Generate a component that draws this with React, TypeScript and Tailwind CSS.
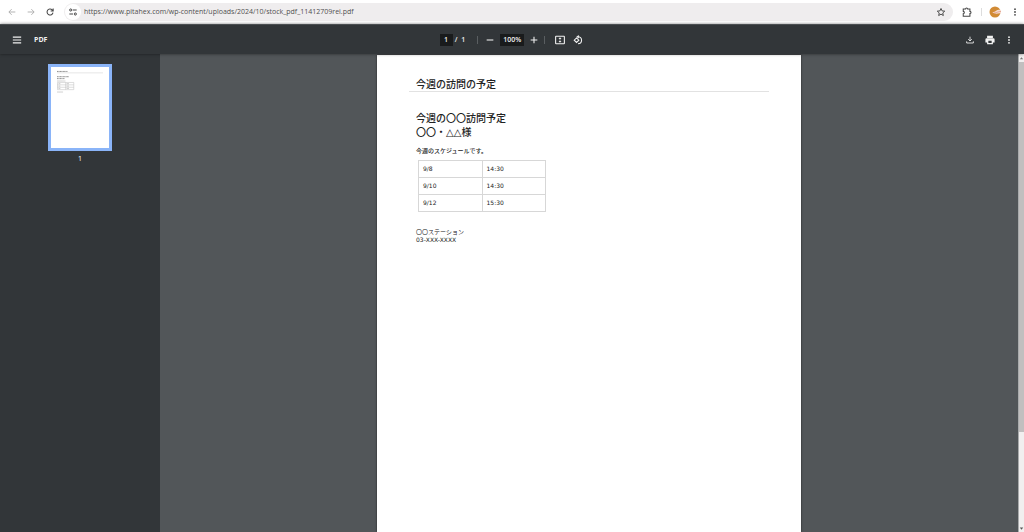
import type { ReactNode } from "react";

const visits = [
  { date: "9/8", time: "14:30" },
  { date: "9/10", time: "14:30" },
  { date: "9/12", time: "15:30" },
];

function Icon({ children, className = "" }: { children: ReactNode; className?: string }) {
  return (
    <svg viewBox="0 0 24 24" fill="none" stroke="currentColor" strokeWidth="2" className={className} aria-hidden="true">
      {children}
    </svg>
  );
}

function IconButton({ label, className = "", children }: { label: string; className?: string; children: ReactNode }) {
  return (
    <button type="button" aria-label={label} className={`flex shrink-0 items-center justify-center ${className}`}>
      {children}
    </button>
  );
}

function Dots({ className = "" }: { className?: string }) {
  return (
    <Icon className={className}>
      <g fill="currentColor" stroke="none">
        <circle cx="12" cy="3.500" r="2.700" />
        <circle cx="12" cy="12" r="2.700" />
        <circle cx="12" cy="20.500" r="2.700" />
      </g>
    </Icon>
  );
}

function BrowserBar() {
  return (
    <header className="flex h-6 shrink-0 items-center bg-white pb-px pl-1.5 text-[#474747]">
      <IconButton label="戻る" className="mr-[7px] size-3 text-[#a5a5a5]">
        <Icon className="size-2"><path strokeWidth="2.500" d="M22 12H3M11 3.500 2.500 12l8.500 8.500" /></Icon>
      </IconButton>
      <IconButton label="進む" className="mr-[7px] size-3 text-[#a5a5a5]">
        <Icon className="size-2"><path strokeWidth="2.500" d="M2 12h19M13 3.500l8.500 8.500-8.500 8.500" /></Icon>
      </IconButton>
      <IconButton label="再読み込み" className="mr-2 size-3">
        <Icon className="size-2"><path strokeWidth="3.200" d="M21 14A9 9 0 1 1 18.500 5.500L21 8M21.500 1.500v7.500H14" /></Icon>
      </IconButton>
      <div className="flex h-[18px] min-w-0 grow items-center rounded-full bg-[#efedee] pl-px pr-1.5">
        <IconButton label="サイト情報" className="size-4 rounded-full bg-white">
          <Icon className="size-2">
            <path strokeWidth="3.200" d="M11 6h12M1 18h11" />
            <circle strokeWidth="3" cx="5" cy="6" r="3.200" />
            <circle strokeWidth="3" cx="19" cy="18" r="3.200" />
          </Icon>
        </IconButton>
        <input
          aria-label="アドレス"
          readOnly
          value="https://www.pitahex.com/wp-content/uploads/2024/10/stock_pdf_11412709rei.pdf"
          className="min-w-0 grow bg-transparent pl-[3px] font-['Open_Sans',sans-serif] text-[7px] leading-3 text-[#505050] outline-none"
        />
        <IconButton label="ブックマーク" className="size-3">
          <Icon className="size-2.5"><path strokeWidth="2.300" d="m12 3.500 2.600 5.800 6.400.700-4.800 4.300 1.400 6.200-5.600-3.300-5.600 3.300 1.400-6.200L3 10l6.400-.700z" /></Icon>
        </IconButton>
      </div>
      <IconButton label="拡張機能" className="ml-2 size-3">
        <Icon className="size-2.5"><path strokeWidth="2.500" d="M3 5h5.500c0-3.500 5-3.500 5 0H19v5.500c3.500 0 3.500 5 0 5V22H3v-6c3.500-.500 3.500-5 0-5.500z" /></Icon>
      </IconButton>
      <span className="ml-2 mr-[7px] h-2 w-px shrink-0 bg-[#dddddd]" />
      <IconButton label="プロフィール" className="size-3">
        <svg viewBox="0 0 24 24" className="size-3" aria-hidden="true">
          <circle cx="12" cy="12" r="11" fill="#d18b35" />
          <path d="M7 13c3-1 5-2 8-4 2-2 5-2 9-1v7c-4-1-8 1-12 0-2-1-4 0-5-2z" fill="#f6dfd3" />
          <path d="M9 14c5 0 9-3 15-3" stroke="#d8836c" strokeWidth="1.200" fill="none" />
        </svg>
      </IconButton>
      <IconButton label="メニュー" className="ml-2 mr-[3px] size-3"><Dots className="size-2" /></IconButton>
    </header>
  );
}

function ViewerBar() {
  return (
    <div className="z-10 grid h-[30px] shrink-0 grid-cols-3 items-center border-t border-[#4b4f52] bg-[#323639] pr-px font-['Open_Sans',sans-serif] text-[7px] leading-3 text-[#f1f1f1] shadow-[0_0_3px_rgba(0,0,0,0.5)]">
      <div className="flex items-center gap-3 pl-3">
        <IconButton label="サイドバー" className="size-2.5">
          <Icon className="size-2.5"><path strokeWidth="2.800" d="M2 5h20M2 12h20M2 19h20" /></Icon>
        </IconButton>
        <h1 className="font-bold">PDF</h1>
      </div>
      <div className="flex items-center justify-center">
        <input aria-label="ページ番号" defaultValue="1" className="h-3 w-[13px] bg-[#191b1c] text-center font-semibold outline-none" />
        <span className="ml-0.5 flex gap-1 font-semibold"><span>/</span><span>1</span></span>
        <span className="ml-3 mr-2 h-2 w-px bg-[#5a5e61]" />
        <IconButton label="縮小" className="size-2">
          <Icon className="size-2"><path strokeWidth="3.200" d="M2 12h20" /></Icon>
        </IconButton>
        <input aria-label="倍率" defaultValue="100%" className="mx-1.5 h-3 w-6 bg-[#191b1c] text-center font-semibold outline-none" />
        <IconButton label="拡大" className="size-2">
          <Icon className="size-2"><path strokeWidth="3.200" d="M2 12h20M12 2v20" /></Icon>
        </IconButton>
        <span className="ml-1.5 mr-2.5 h-2 w-px bg-[#5a5e61]" />
        <IconButton label="ページに合わせる" className="mr-2 size-2.5">
          <Icon className="size-2.5">
            <rect x="1.500" y="3" width="21" height="18" rx="1" strokeWidth="2.600" />
            <path fill="currentColor" stroke="none" d="m12 5.500 3.500 4h-7zM12 18.500l3.500-4h-7zM10.800 10.800h2.400v2.400h-2.400z" />
          </Icon>
        </IconButton>
        <IconButton label="左に回転" className="size-2.5">
          <Icon className="size-2.5">
            <path strokeWidth="2.600" d="m8.500 7 5.500 5.500L8.500 18 3 12.500zM12 4a8.500 8.500 0 1 1 0 17" />
            <path fill="currentColor" stroke="none" d="M14 0v8.500L8 4z" />
          </Icon>
        </IconButton>
      </div>
      <div className="flex items-center justify-end gap-2.5 pr-2.5">
        <IconButton label="ダウンロード" className="size-2.5">
          <Icon className="size-2"><path strokeWidth="2.600" d="M12 2v12M6.500 9.500 12 15l5.500-5.500M2 16v5h20v-5" /></Icon>
        </IconButton>
        <IconButton label="印刷" className="size-2.5">
          <Icon className="size-2.5">
            <path fill="currentColor" stroke="none" d="M5 2h14v5H5zM4 8h16a3 3 0 0 1 3 3v7h-4v4H5v-4H1v-7a3 3 0 0 1 3-3zm4 6v5h8v-5z" />
          </Icon>
        </IconButton>
        <IconButton label="その他の操作" className="size-2"><Dots className="size-2" /></IconButton>
      </div>
    </div>
  );
}

function Thumbnail() {
  return (
    <button type="button" className="flex flex-col items-center gap-[3px] text-white">
      <span className="block h-[87px] w-16 border-[3px] border-[#8ab4f8] bg-white px-1.5 pt-[3px]">
        <svg viewBox="0 0 48 30" className="block w-full" aria-hidden="true">
          <path d="M0 3h48" stroke="#dddddd" strokeWidth=".8" />
          <path d="M0 1.500h11M0 7h12.500M0 9h8" stroke="#8a8a8a" strokeWidth="1" strokeDasharray="1.200 .3" />
          <path d="M0 11.500h9M0 23h6.500" stroke="#a5a5a5" strokeWidth=".7" strokeDasharray=".8 .3" />
          <path d="M.5 13h17v7.500H.5zM9 13v7.500M.5 15.500h17M.5 18h17" fill="none" stroke="#c4c4c4" strokeWidth=".6" />
          <path d="M1.500 14.300h2M10 14.300h2.500M1.500 16.800h2M10 16.800h2.500M1.500 19.200h2M10 19.200h2.500" stroke="#a5a5a5" strokeWidth=".6" />
        </svg>
      </span>
      <span className="font-['Open_Sans',sans-serif] text-[7px] leading-[9px]">1</span>
    </button>
  );
}

function PdfPage() {
  return (
    <article className="w-[424px] max-w-full bg-white px-8 pt-6 font-['DejaVu_Sans','Noto_Sans_CJK_JP',sans-serif] text-[6px] leading-2 text-[#222222] shadow-[0_0_2px_rgba(0,0,0,0.6)]">
      <h2 className="border-b border-[#e2e2e2] px-[7px] text-[10px] font-medium leading-3">今週の訪問の予定</h2>
      <div className="px-[7px]">
        <h3 className="mt-5 text-[10px] font-medium leading-[14px]">
          今週の〇〇訪問予定<br />〇〇・△△様
        </h3>
        <p className="mt-[7px] font-medium">今週のスケジュールです。</p>
        <table className="ml-0.5 mt-[5px] w-32 table-fixed border-collapse">
          <tbody>
            {visits.map((visit) => (
              <tr key={visit.date} className="h-[17px]">
                <td className="border border-[#d7d7d7] px-1">{visit.date}</td>
                <td className="border border-[#d7d7d7] px-1">{visit.time}</td>
              </tr>
            ))}
          </tbody>
        </table>
        <p className="mt-4">〇〇ステーション<br />03-XXX-XXXX</p>
      </div>
    </article>
  );
}

function ScrollTrack() {
  return (
    <div className="flex w-1.5 shrink-0 flex-col items-center justify-between border-l border-[#a9abac] bg-[#f1efef]" aria-hidden="true">
      <svg viewBox="0 0 6 8" className="h-2 w-full"><path d="M3 3 5 5.500H1z" fill="#777777" /></svg>
      <div className="w-full grow"><div className="h-4/5 w-full bg-[#c1bfbf]" /></div>
      <svg viewBox="0 0 6 8" className="h-2 w-full"><path d="M3 6 5 3.500H1z" fill="#555555" /></svg>
    </div>
  );
}

export default function App() {
  return (
    <div lang="ja" className="flex h-screen flex-col overflow-hidden bg-[#525659]">
      <BrowserBar />
      <ViewerBar />
      <div className="flex min-h-0 grow">
        <nav aria-label="ページのサムネイル" className="flex w-40 shrink-0 items-start justify-center bg-[#323639] pt-2.5">
          <Thumbnail />
        </nav>
        <main className="flex min-w-0 grow justify-center overflow-hidden pt-px">
          <PdfPage />
        </main>
        <ScrollTrack />
      </div>
    </div>
  );
}
